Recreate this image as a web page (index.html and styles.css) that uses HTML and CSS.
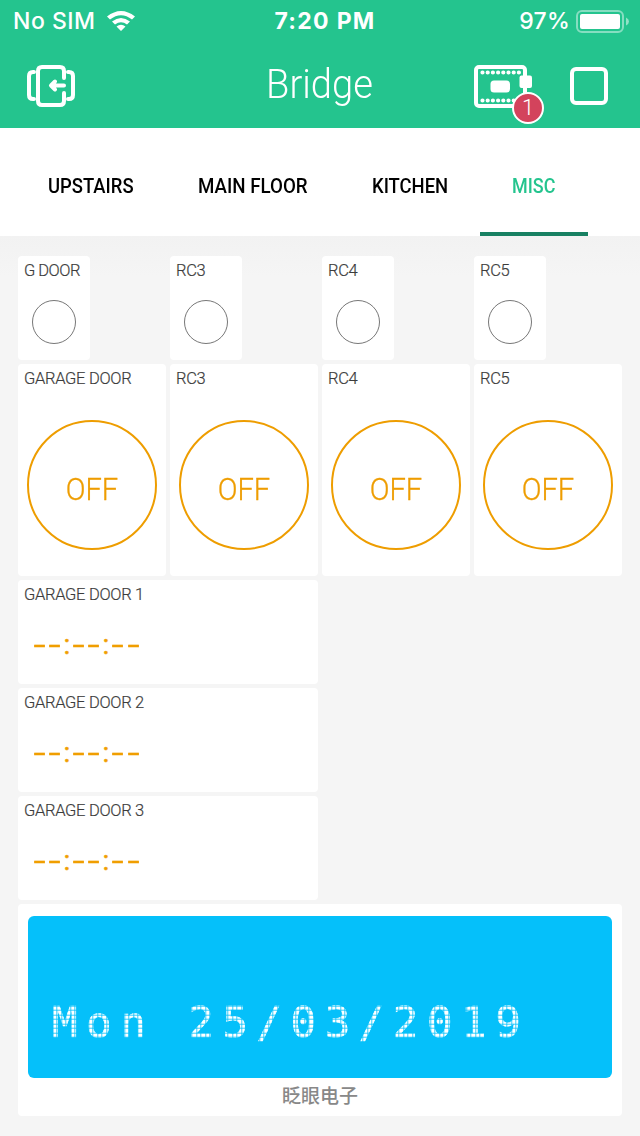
FILE: index.html
```html
<!DOCTYPE html>
<html lang="en">
<head>
<meta charset="utf-8">
<title>Bridge</title>
<link rel="stylesheet" href="styles.css">
</head>
<body>
<header class="header">
  <div class="status">
    <div class="carrier"><span>No SIM</span>
      <svg width="28" height="20" viewBox="0 0 28 20"><path d="M0 5.500Q14-5.500 28 5.500L25 8.500Q14 0 3 8.500ZM5 10.500Q14 3.500 23 10.500L20 13.500Q14 9 8 13.500ZM9.500 15.500Q14 12 18.500 15.500L14 20Z" fill="#fff"/></svg>
    </div>
    <div class="clock">7:20 PM</div>
    <div class="power"><span>97%</span>
      <svg width="53" height="23" viewBox="0 0 53 23"><rect x="1" y="1" width="46" height="21" rx="5" fill="none" stroke="#fff" stroke-opacity=".45" stroke-width="2"/><rect x="4" y="4" width="40" height="15" rx="2" fill="#fff"/><path d="M50 7.500Q53 9 53 11.500T50 15.500Z" fill="#fff" fill-opacity=".5"/></svg>
    </div>
  </div>
  <div class="nav">
    <svg class="exit" width="48" height="42" viewBox="0 0 48 42" fill="none" stroke="#fff" stroke-width="4" stroke-linecap="round" stroke-linejoin="round"><path d="M37 13V6Q37 2 33 2H15Q11 2 11 6V36Q11 40 15 40H33Q37 40 37 36V28M7 7H6Q2 7 2 11V30Q2 34 6 34H7M41 7H42Q46 7 46 11V30Q46 34 42 34H41M37 20.500H25M28 16.500L24 20.500L28 24.500"/></svg>
    <h1 class="title"><span>Bridge</span></h1>
    <div class="device">
      <svg width="58" height="43" viewBox="0 0 58 43"><rect x="2" y="2" width="49" height="39" rx="3" fill="none" stroke="#fff" stroke-width="4"/><path d="M8.500 7.500H47M8.500 35.500H40" stroke="#fff" stroke-width="4.200" stroke-linecap="round" stroke-dasharray="0 5.200"/><rect x="16.500" y="15.500" width="19.500" height="12" rx="3.500" fill="#fff"/><rect x="45.500" y="10.500" width="12.500" height="12.500" rx="2" fill="#fff"/></svg>
      <span class="badge">1</span>
    </div>
    <svg class="stop" width="38" height="38" viewBox="0 0 38 38"><rect x="2" y="2" width="34" height="34" rx="4" fill="none" stroke="#fff" stroke-width="4"/></svg>
  </div>
</header>
<nav class="tabs">
  <div class="tab t1"><span>UPSTAIRS</span></div>
  <div class="tab t2"><span>MAIN FLOOR</span></div>
  <div class="tab t3"><span>KITCHEN</span></div>
  <div class="tab t4 active"><span>MISC</span></div>
</nav>
<main class="board">
  <section class="card led"><h2>G DOOR</h2><i></i></section>
  <section class="card led"><h2>RC3</h2><i></i></section>
  <section class="card led"><h2>RC4</h2><i></i></section>
  <section class="card led"><h2>RC5</h2><i></i></section>
  <section class="card switch"><h2>GARAGE DOOR</h2><button><span>OFF</span></button></section>
  <section class="card switch"><h2>RC3</h2><button><span>OFF</span></button></section>
  <section class="card switch"><h2>RC4</h2><button><span>OFF</span></button></section>
  <section class="card switch"><h2>RC5</h2><button><span>OFF</span></button></section>
  <section class="card timer"><h2>GARAGE DOOR 1</h2><p><b>-</b><b>-</b><em>:</em><b>-</b><b>-</b><em>:</em><b>-</b><b>-</b></p></section>
  <section class="card timer"><h2>GARAGE DOOR 2</h2><p><b>-</b><b>-</b><em>:</em><b>-</b><b>-</b><em>:</em><b>-</b><b>-</b></p></section>
  <section class="card timer"><h2>GARAGE DOOR 3</h2><p><b>-</b><b>-</b><em>:</em><b>-</b><b>-</b><em>:</em><b>-</b><b>-</b></p></section>
  <section class="card display">
    <div class="lcd"><pre>Mon 25/03/2019</pre></div>
    <div class="caption" lang="zh-CN">眨眼电子</div>
  </section>
</main>
</body>
</html>
```
FILE: styles.css
```css
* { box-sizing: border-box; margin: 0; padding: 0; }
body { width: 640px; height: 1136px; overflow: hidden; background: #f5f5f5; font-family: Roboto, "Liberation Sans", sans-serif; }
svg { display: block; flex: none; }
.header { height: 128px; background: #24c48e; color: #fff; }
.status { height: 40px; display: grid; grid-template-columns: 1fr 1fr 1fr; align-items: center; padding: 0 11px 0 13px; font: 500 23px/42px Inter, sans-serif; white-space: nowrap; }
.carrier, .power { display: flex; align-items: center; }
.carrier { gap: 11px; letter-spacing: .5px; }
.clock { text-align: center; padding-left: 8px; font-weight: 700; letter-spacing: 1.300px; }
.power { justify-content: flex-end; gap: 6px; letter-spacing: .2px; }
.nav { height: 88px; display: flex; align-items: flex-start; padding: 25px 32px 0 27px; }
.title { flex: 1; padding-left: 191px; font-weight: 300; font-size: 41px; line-height: 38px; }
.title span { display: inline-block; transform: scaleX(.93); transform-origin: left; }
.device { position: relative; width: 58px; margin-right: 38px; }
.badge { position: absolute; left: 38px; top: 27px; width: 32px; height: 32px; border: 2px solid #fff; border-radius: 50%; background: #d3435c; text-align: center; font: 300 22px/28px Roboto, sans-serif; }
.stop { margin-top: 2px; }
.tabs { height: 108px; background: #fff; display: flex; padding-left: 16px; font-size: 19.500px; font-weight: 500; line-height: 117px; color: #000; white-space: nowrap; }
.tab { padding-left: 32px; height: 108px; }
.tab span { display: inline-block; transform: scaleX(.945); transform-origin: left; }
.t1 { width: 150px; }
.t2 { width: 174px; }
.t2 span { transform: scaleX(.96); }
.t3 { width: 140px; }
.t4 { width: 108px; }
.t4 span { transform: scaleX(.92); }
.active { color: #24c48e; border-bottom: 4px solid #188062; }
.board { height: 900px; padding: 20px 18px; display: grid; grid-template-columns: repeat(8, 72px); grid-template-rows: 104px 212px 104px 104px 104px 212px; gap: 4px; background: linear-gradient(#f2f2f2, #f5f5f5 40px); }
.card { background: #fff; border-radius: 4px; min-width: 0; }
.card h2 { padding: 5px 0 0 6px; height: 28px; font-size: 16.500px; line-height: 20px; font-weight: 300; color: #3c3c3c; -webkit-text-stroke: .2px; letter-spacing: -.3px; white-space: nowrap; }
.led:nth-child(1) h2 { letter-spacing: -.5px; }
.led i { display: block; width: 44px; height: 44px; margin: 16px auto 0; border: 1px solid #777; border-radius: 50%; }
.led:nth-child(1) { grid-column: 1; }
.led:nth-child(2) { grid-column: 3; }
.led:nth-child(3) { grid-column: 5; }
.led:nth-child(4) { grid-column: 7; }
.switch { grid-column: span 2; }
.switch button { display: block; width: 130px; height: 130px; margin: 28px auto 0; padding-top: 9px; border: 2px solid #ee9d00; border-radius: 50%; background: none; color: #ee9d00; font: 300 31px/36px Roboto, sans-serif; }
.switch span { display: inline-block; transform: scaleX(.94); -webkit-text-stroke: .3px; }
.timer { grid-column: 1 / span 4; }
.timer p { display: flex; padding: 19px 0 0 14px; color: #f09e00; font: 400 28px/36px Roboto, sans-serif; }
.timer b, .timer em { font-style: normal; font-weight: 400; text-align: center; -webkit-text-stroke: .5px; }
.timer b { width: 15.200px; transform: scaleX(1.5); }
.timer em { width: 8.800px; }
.display { grid-column: 1 / -1; padding: 12px 10px 0; }
.lcd { height: 162px; border-radius: 6px; background: #05c0fa; padding: 82px 0 0 24px; }
.lcd pre { width: max-content; color: #fff; font: 400 42.500px/50px "DejaVu Sans Mono", monospace; letter-spacing: 8.500px; -webkit-text-stroke: .6px; mask-image: repeating-linear-gradient(90deg, #000 0 3.300px, #0003 3.300px 4.500px), repeating-linear-gradient(#000 0 3.300px, #0003 3.300px 4.500px); mask-position: 1.300px 0, 0 -.3px; mask-composite: intersect; }
.caption { margin-top: 8px; text-align: center; color: #888; font: 500 19px/18px "Noto Sans CJK SC", sans-serif; }
```
